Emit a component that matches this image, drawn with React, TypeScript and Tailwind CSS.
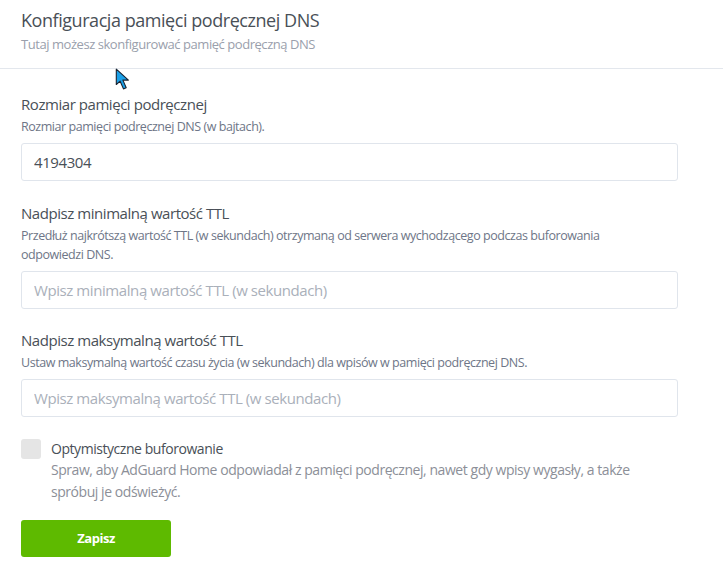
import { useState } from "react";

const Field = ({
  label,
  desc,
  placeholder,
  value,
  className = "mb-[22px]",
}: {
  label: string;
  desc: React.ReactNode;
  placeholder?: string;
  value?: string;
  className?: string;
}) => {
  const [val, setVal] = useState(value ?? "");
  return (
    <div className={className}>
      <div className="text-[15px] leading-[20px] text-[#495057]">{label}</div>
      <div className="mt-[3px] text-[12.5px] leading-[19px] text-[#6e7687]">{desc}</div>
      <input
        className="mt-[7px] block h-[38px] w-[657px] rounded-[3px] border border-[#e0e5ec] bg-white px-[12px] text-[15px] tracking-[-0.028em] text-[#495057] placeholder:text-[#aab0ba] outline-none"
        placeholder={placeholder}
        value={val}
        onChange={(e) => setVal(e.target.value)}
      />
    </div>
  );
};

export default function App() {
  const [checked, setChecked] = useState(false);

  return (
    <div className="relative h-[580px] w-[723px] overflow-hidden bg-white font-['Open_Sans',sans-serif] tracking-[-0.028em]">
      <div className="px-[21px] pt-[8px] pb-[15px]">
        <h2 className="text-[18px] leading-[24px] font-normal text-[#495057]">
          Konfiguracja pamięci podręcznej DNS
        </h2>
        <div className="mt-[3px] text-[13px] leading-[18px] text-[#9aa0ac]">
          Tutaj możesz skonfigurować pamięć podręczną DNS
        </div>
      </div>
      <div className="h-px bg-[#e3e7ed]" />

      <div className="px-[21px] pt-[25px]">
        <Field
          label="Rozmiar pamięci podręcznej"
          desc="Rozmiar pamięci podręcznej DNS (w bajtach)."
          value="4194304"
        />
        <Field
          label="Nadpisz minimalną wartość TTL"
          desc={
            <>
              Przedłuż najkrótszą wartość TTL (w sekundach) otrzymaną od serwera wychodzącego podczas buforowania
              <br />
              odpowiedzi DNS.
            </>
          }
          placeholder="Wpisz minimalną wartość TTL (w sekundach)"
          className="mb-[21px]"
        />
        <Field
          label="Nadpisz maksymalną wartość TTL"
          desc="Ustaw maksymalną wartość czasu życia (w sekundach) dla wpisów w pamięci podręcznej DNS."
          placeholder="Wpisz maksymalną wartość TTL (w sekundach)"
        />

        <label className="flex cursor-pointer items-start gap-[10px]">
          <input
            type="checkbox"
            className="peer sr-only"
            checked={checked}
            onChange={(e) => setChecked(e.target.checked)}
          />
          <span className="h-[20px] w-[20px] shrink-0 rounded-[3px] bg-[#e5e5e5]" />
          <span>
            <span className="block text-[14px] leading-[20px] text-[#495057]">
              Optymistyczne buforowanie
            </span>
            <span className="block text-[14px] leading-[22px] text-[#8c8f98]">
              Spraw, aby AdGuard Home odpowiadał z pamięci podręcznej, nawet gdy wpisy wygasły, a także
              <br />
              spróbuj je odświeżyć.
            </span>
          </span>
        </label>

        <button className="mt-[17px] h-[37px] w-[150px] rounded-[3px] bg-[#5eba00] text-[13px] font-bold text-white">
          Zapisz
        </button>
      </div>

      <svg className="pointer-events-none absolute left-[115px] top-[68px]" width="18" height="22" viewBox="0 0 16 20">
        <path d="M1 1 L1 15 L4.5 12 L7.5 19 L10 18 L7 11 L12 11 Z" fill="#1aa0e8" stroke="#1a2330" strokeWidth="1" strokeLinejoin="round" />
      </svg>
    </div>
  );
}
